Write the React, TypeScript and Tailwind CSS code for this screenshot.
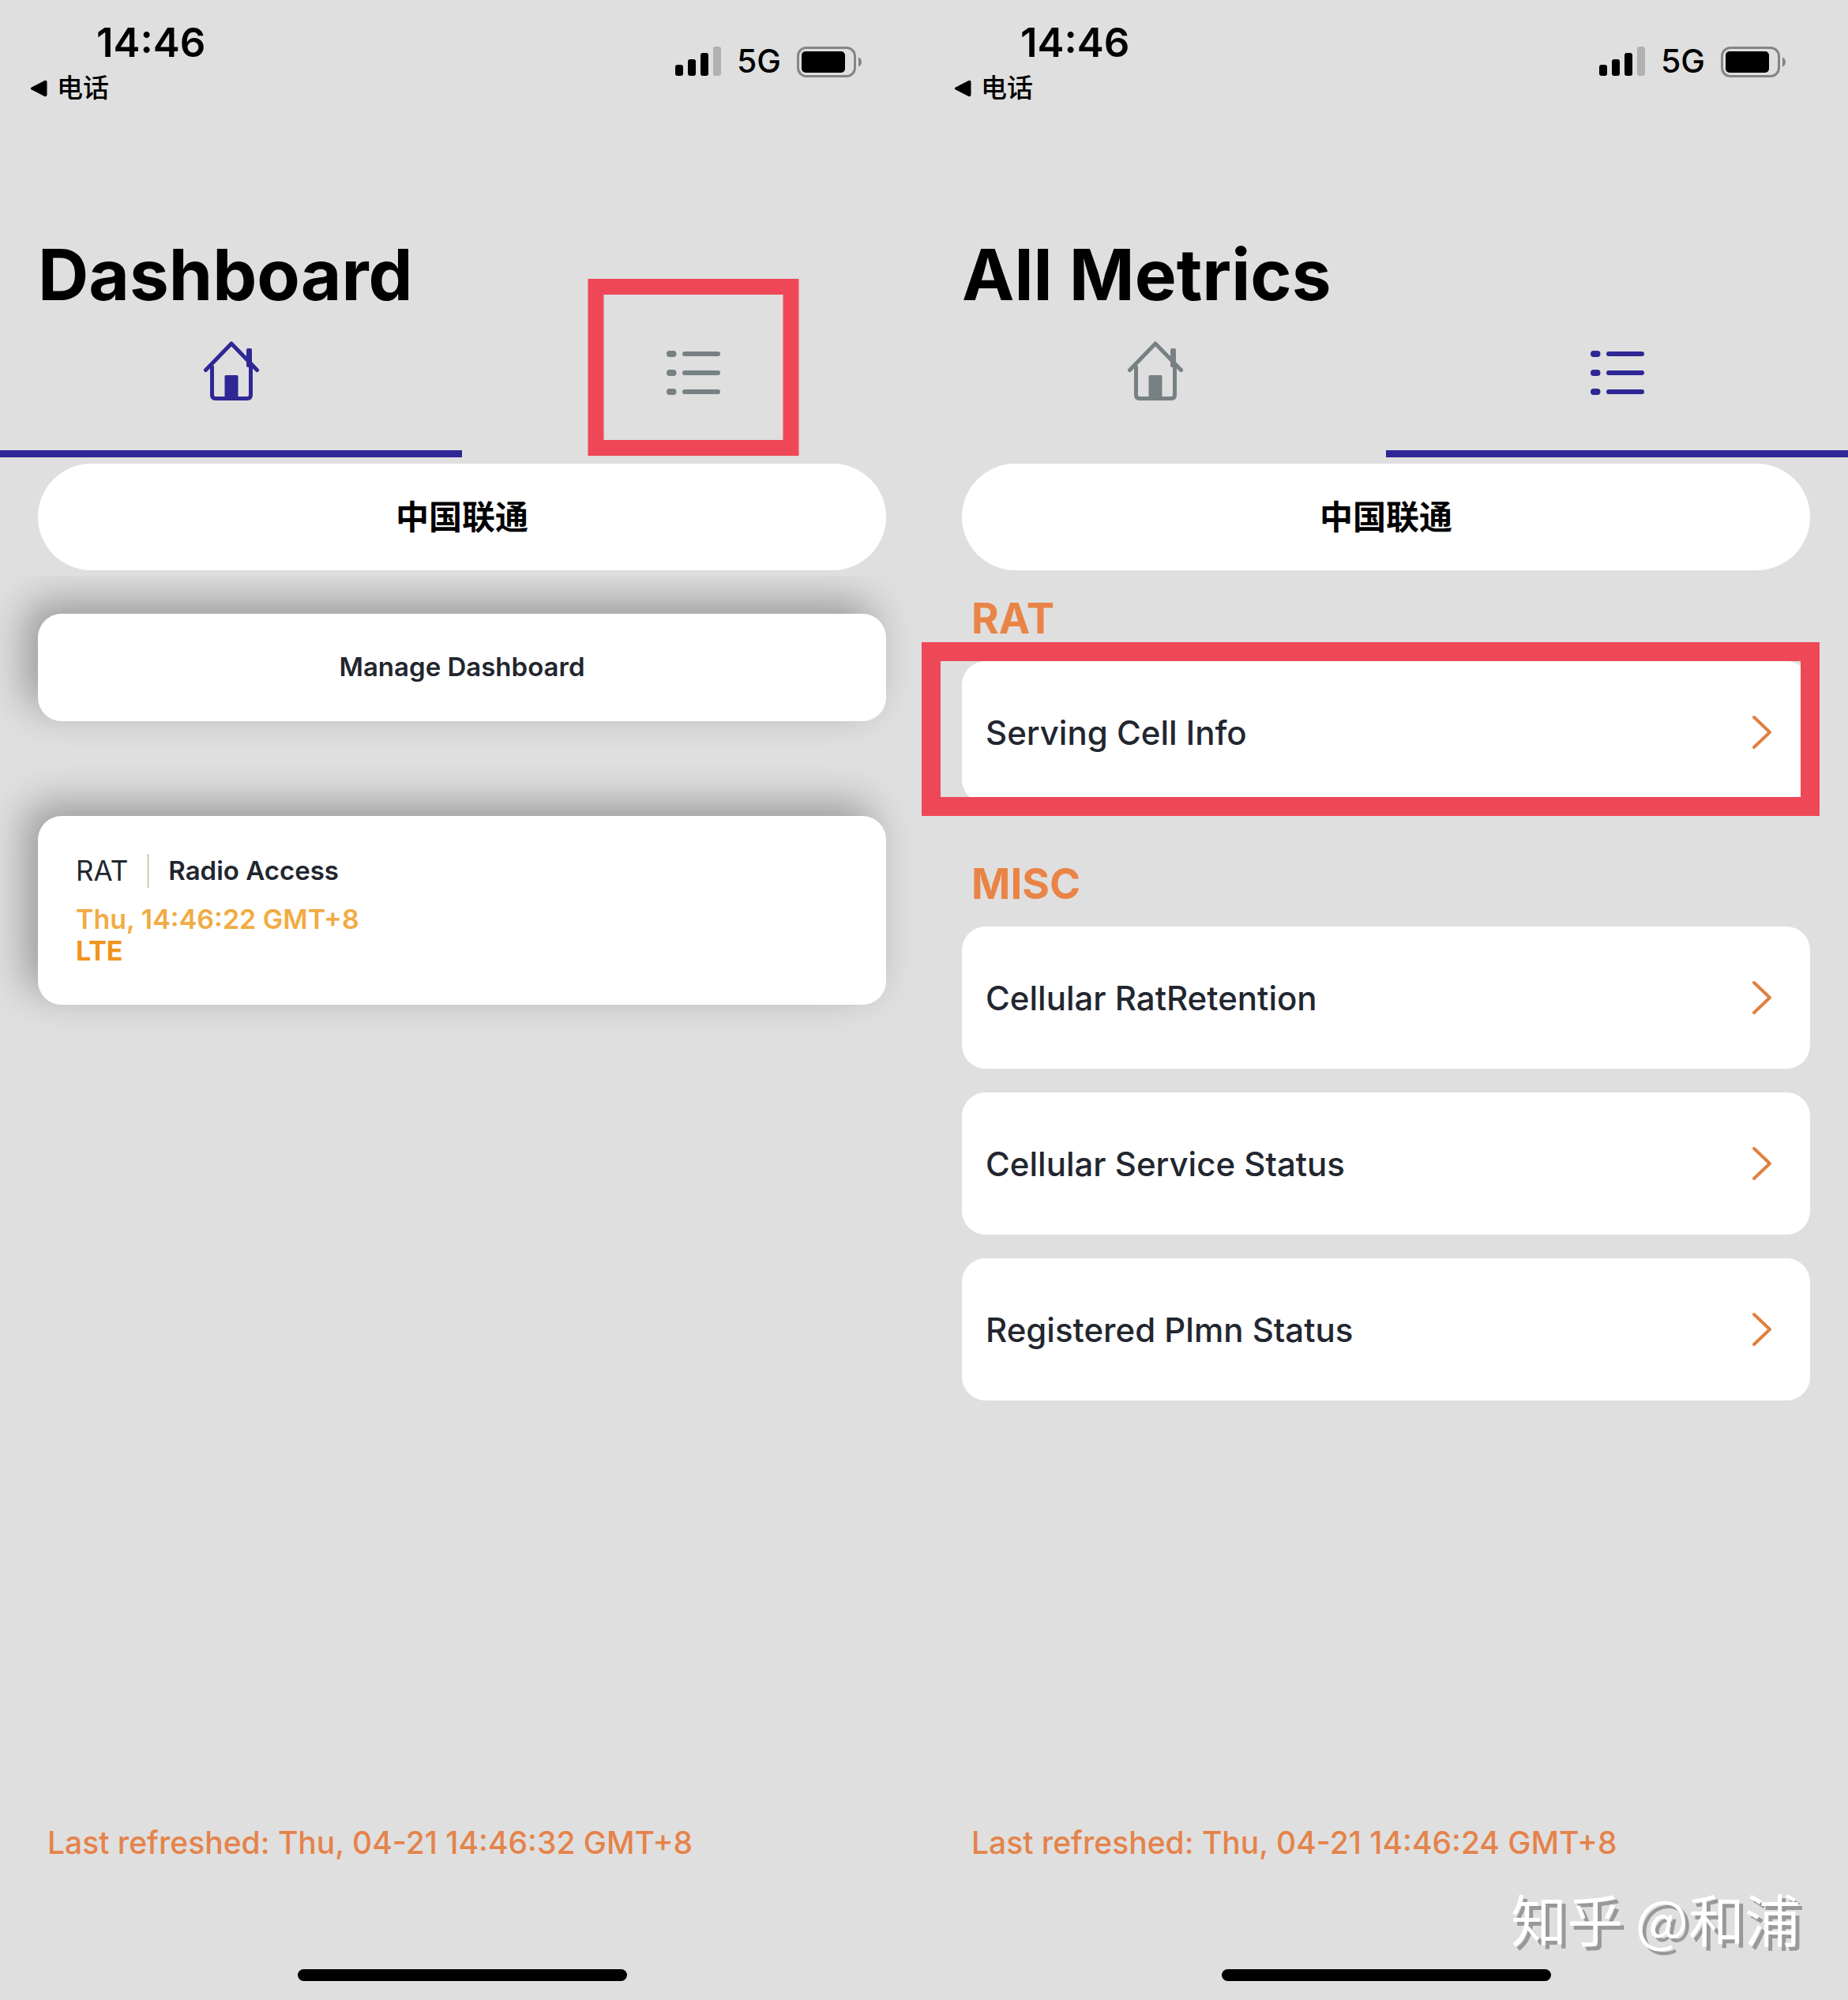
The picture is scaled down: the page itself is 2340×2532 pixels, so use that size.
import type { ReactNode } from 'react'
import { clsx } from 'clsx'

type Tab = 'dashboard' | 'metrics'

const METRIC_GROUPS: { title: string; items: { label: string; highlighted?: boolean }[] }[] = [
  { title: 'RAT', items: [{ label: 'Serving Cell Info', highlighted: true }] },
  {
    title: 'MISC',
    items: [
      { label: 'Cellular RatRetention' },
      { label: 'Cellular Service Status' },
      { label: 'Registered Plmn Status' },
    ],
  },
]

function SignalIcon() {
  return (
    <svg width="58" height="38" viewBox="0 0 58 38" aria-hidden="true">
      <rect x="0" y="23" width="10" height="14" rx="3" />
      <rect x="16" y="16" width="10" height="21" rx="3" />
      <rect x="32" y="8" width="10" height="29" rx="3" />
      <rect x="48" y="0" width="10" height="37" rx="3" fill="#b1b1b1" />
    </svg>
  )
}

function BatteryIcon() {
  return (
    <svg width="83" height="39" viewBox="0 0 83 39" aria-hidden="true">
      <rect x="1.5" y="1.5" width="72" height="36" rx="10.5" fill="none" stroke="#858585" strokeWidth="3" />
      <rect x="6" y="6" width="55" height="27" rx="5" />
      <path d="M78 13.5c2.600 1 4 3.200 4 6s-1.400 5-4 6z" fill="#858585" />
    </svg>
  )
}

function HomeIcon() {
  return (
    <svg width="72" height="80" viewBox="0 0 72 80" fill="none" stroke="currentColor" strokeLinecap="round" strokeLinejoin="round" aria-hidden="true">
      <path d="M3.500 36.500 36 3l32.500 33.500" strokeWidth="5" />
      <path d="M11.500 31v37q0 4.500 4.500 4.500h40q4.500 0 4.500-4.500V31" strokeWidth="5" strokeLinecap="butt" />
      <rect x="55" y="9" width="7" height="24" rx="2" fill="currentColor" stroke="none" />
      <rect x="27.500" y="43" width="17" height="30" rx="1.500" fill="currentColor" stroke="none" />
    </svg>
  )
}

function ListIcon() {
  return (
    <svg width="68" height="56" viewBox="0 0 68 56" fill="currentColor" aria-hidden="true">
      {[0, 24, 48].map((y) => (
        <g key={y}>
          <rect x="0" y={y} width="12.500" height="8" rx="4" />
          <rect x="20" y={y + 1} width="48" height="6" rx="3" />
        </g>
      ))}
    </svg>
  )
}

function ChevronIcon() {
  return (
    <svg width="26" height="44" viewBox="0 0 26 44" fill="none" stroke="#e08040" strokeWidth="4" strokeLinecap="round" strokeLinejoin="round" aria-hidden="true">
      <path d="M3 3l20 19L3 41" />
    </svg>
  )
}

function StatusBar() {
  return (
    <header className="flex h-[140px] justify-between pl-[38px] pr-[78px]">
      <div className="pt-6">
        <p className="pl-[84px] text-[51px] leading-[60px] font-semibold">14:46</p>
        <a href="#phone" className="flex h-14 items-center gap-3 text-[33px] font-medium">
          <svg width="22" height="22" viewBox="0 0 22 22" aria-hidden="true">
            <path d="M2 9.500 18 1.200Q21.500 0 21.500 3v16q0 3-3.500 1.800L2 12.500Q-.5 11 2 9.500z" />
          </svg>
          电话
        </a>
      </div>
      <div className="flex h-[156px] items-center gap-5">
        <SignalIcon />
        <span className="text-[41px] font-medium">5G</span>
        <BatteryIcon />
      </div>
    </header>
  )
}

function TabButton({ label, active, highlighted, children }: {
  label: string; active: boolean; highlighted?: boolean; children: ReactNode
}) {
  return (
    <button
      aria-label={label}
      className={clsx(
        'relative flex h-full flex-1 justify-center border-b-[9px] pt-8',
        active ? 'border-[#2f2795] text-[#2f2795]' : 'border-transparent text-[#778082]',
      )}>
      <span className="flex h-20 items-center">{children}</span>
      {highlighted && (
        <span className="absolute -top-[47px] left-1/2 h-[224px] w-[267px] -translate-x-1/2 border-[20px] border-[#ee4858]" />
      )}
    </button>
  )
}

function Screen({ title, tab, highlightList, refreshed, children }: {
  title: string; tab: Tab; highlightList?: boolean; refreshed: string; children: ReactNode
}) {
  return (
    <section className="flex min-h-screen flex-1 flex-col">
      <StatusBar />
      <h1 className="px-12 pt-[156px] text-[89px] leading-[104px] font-bold">{title}</h1>
      <nav className="flex h-[179px]">
        <TabButton label="Dashboard" active={tab === 'dashboard'}><HomeIcon /></TabButton>
        <TabButton label="All Metrics" active={tab === 'metrics'} highlighted={highlightList}><ListIcon /></TabButton>
      </nav>
      <div className="mx-12 mt-2 mb-[7px] flex h-[135px] items-center justify-center rounded-full bg-white text-[42px] font-bold">
        中国联通
      </div>
      {children}
      <footer className="mt-auto flex flex-col items-center">
        <p className="w-full px-[60px] pb-[137px] text-[39px] leading-[46px] font-medium text-[#e5834a]">
          Last refreshed: {refreshed}
        </p>
        <div className="mb-6 h-[15px] w-[417px] rounded-full bg-black" />
      </footer>
    </section>
  )
}

function MetricRow({ label, highlighted }: { label: string; highlighted?: boolean }) {
  return (
    <li className="relative">
      <button className="flex h-[180px] w-full items-center justify-between rounded-[30px] bg-white pr-12 pl-[30px] text-[42px] font-medium text-[#22262f]">
        {label}
        <ChevronIcon />
      </button>
      {highlighted && (
        <span className="pointer-events-none absolute -top-6 -right-3 -bottom-4 -left-[51px] border-[24px] border-[#ee4858]" />
      )}
    </li>
  )
}

export default function App() {
  return (
    <main className="relative flex min-h-screen bg-[#dfdfdf] font-['Inter','Noto_Sans_CJK_SC',sans-serif] text-black">
      <Screen title="Dashboard" tab="dashboard" highlightList refreshed="Thu, 04-21 14:46:32 GMT+8">
        <div className="flex flex-col gap-[120px] overflow-hidden px-12 pt-12 pb-20">
          <button className="h-[136px] rounded-[30px] bg-white text-[33px] font-semibold text-[#22262f] shadow-[-16px_-16px_50px_rgba(0,0,0,0.31)]">
            Manage Dashboard
          </button>
          <article className="h-[239px] rounded-[30px] bg-white px-12 pt-12 shadow-[-16px_-16px_50px_rgba(0,0,0,0.31)]">
            <div className="flex h-[43px] items-center text-[#22262f]">
              <span className="text-[35px]">RAT</span>
              <span className="mx-[25px] h-full w-px bg-[#b3a06a]" />
              <h2 className="text-[33px] font-semibold">Radio Access</h2>
            </div>
            <p className="mt-5 text-[34px] leading-10 font-semibold text-[#f1ab43]">Thu, 14:46:22 GMT+8</p>
            <p className="text-[34px] leading-10 font-bold text-[#f0941c]">LTE</p>
          </article>
        </div>
      </Screen>

      <Screen title="All Metrics" tab="metrics" refreshed="Thu, 04-21 14:46:24 GMT+8">
        <div className="flex flex-col gap-12 px-12">
          {METRIC_GROUPS.map((group) => (
            <div key={group.title}>
              <h2 className="px-3 text-[53px] leading-[108px] font-bold text-[#e98446]">{group.title}</h2>
              <ul className="flex flex-col gap-[30px]">
                {group.items.map((item) => <MetricRow key={item.label} {...item} />)}
              </ul>
            </div>
          ))}
        </div>
      </Screen>

      {/* Watermark */}
      <p className="absolute right-[60px] bottom-[61px] font-['Noto_Sans_CJK_SC',sans-serif] text-[71px] leading-[88px] text-white [text-shadow:5px_5px_0_#999]">
        知乎 @和浦
      </p>
    </main>
  )
}
